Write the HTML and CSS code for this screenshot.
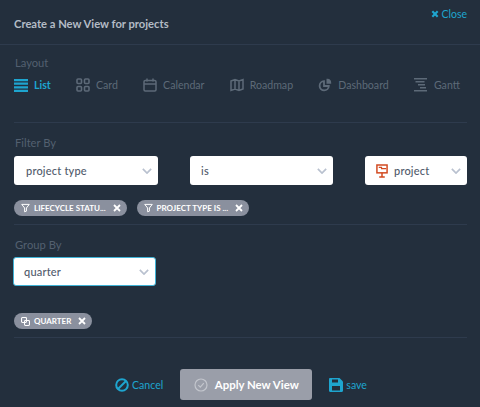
FILE: index.html
```html
<!DOCTYPE html>
<html lang="en">
  <head>
    <meta charset="UTF-8" />
    <title>Create a New View</title>
    <link rel="stylesheet" href="styles.css">
  </head>

  <body>
    <div class="modal">
      <div class="header">
        <p class="title">Create a New View for projects</p>
        <a class="close">
          <svg width="8" height="8" viewBox="0 0 9 9"><path d="M1.500 1.500l6 6M7.500 1.500l-6 6" stroke="#1ea5cf" stroke-width="2.400" fill="none"/></svg>
          Close
        </a>
      </div>

      <div class="section layoutSection">
        <p class="label">Layout</p>
        <div class="tabs">
          <div class="tab active">
            <svg width="14" height="13" viewBox="0 0 14 13"><path d="M0 0h14v2.200H0zM0 3.600h14v2.200H0zM0 7.200h14v2.200H0zM0 10.800h14V13H0z" fill="#1ea5cf"/></svg>
            <span>List</span>
          </div>
          <div class="tab">
            <svg width="14" height="14" viewBox="0 0 14 14" fill="none" stroke="#5d6a78" stroke-width="1.600"><rect x="1" y="1" width="4.500" height="4.500" rx="1"/><rect x="8.500" y="1" width="4.500" height="4.500" rx="1"/><rect x="1" y="8.500" width="4.500" height="4.500" rx="1"/><rect x="8.500" y="8.500" width="4.500" height="4.500" rx="1"/></svg>
            <span>Card</span>
          </div>
          <div class="tab">
            <svg width="14" height="14" viewBox="0 0 14 14" fill="none" stroke="#5d6a78" stroke-width="1.500"><rect x="1" y="2.500" width="12" height="10.500" rx="1.200"/><path d="M1 6h12M4 0.500v3M10 0.500v3"/></svg>
            <span>Calendar</span>
          </div>
          <div class="tab">
            <svg width="14" height="14" viewBox="0 0 14 14" fill="none" stroke="#5d6a78" stroke-width="1.500"><path d="M1 3l4-1.500 4 1.500 4-1.500v9.500l-4 1.500-4-1.500-4 1.500zM5 1.500V11M9 3v9.500"/></svg>
            <span>Roadmap</span>
          </div>
          <div class="tab">
            <svg width="14" height="14" viewBox="0 0 14 14" fill="none" stroke="#5d6a78" stroke-width="1.800"><path d="M6 3.200a4.600 4.600 0 1 0 4.800 4.800H6z"/><path d="M8.500 0.800h1a4 4 0 0 1 3.700 4v1H8.500z" fill="#5d6a78" stroke="none"/></svg>
            <span>Dashboard</span>
          </div>
          <div class="tab">
            <svg width="14" height="14" viewBox="0 0 14 14"><path d="M0 0h13v1.500H0zM1.500 3h9v1.500h-9zM4 6h7v1.500H4zM6 9h6v1.500H6zM0 12h13v1.500H0z" fill="#5d6a78"/></svg>
            <span>Gantt</span>
          </div>
        </div>
      </div>

      <div class="section filterSection">
        <p class="label">Filter By</p>
        <div class="filterRow">
          <div class="select typeSelect">
            <span>project type</span>
            <svg class="arrow" width="10" height="6" viewBox="0 0 12 7"><path d="M1 1l5 5 5-5" stroke="#b9c1cf" stroke-width="2" fill="none"/></svg>
          </div>
          <div class="select opSelect">
            <span>is</span>
            <svg class="arrow" width="10" height="6" viewBox="0 0 12 7"><path d="M1 1l5 5 5-5" stroke="#b9c1cf" stroke-width="2" fill="none"/></svg>
          </div>
          <div class="select valueSelect">
            <svg width="12" height="14" viewBox="0 0 13 15" fill="none" stroke="#d2491f"><rect x="1" y="1" width="11" height="8.500" stroke-width="1.600"/><path d="M3 3.500h3v1.500h5" stroke-width="1.300"/><path d="M6.500 9.500v4M3.500 14h6" stroke-width="1.600"/></svg>
            <span>project</span>
            <svg class="arrow" width="10" height="6" viewBox="0 0 12 7"><path d="M1 1l5 5 5-5" stroke="#b9c1cf" stroke-width="2" fill="none"/></svg>
          </div>
        </div>
        <div class="chips">
          <div class="chip">
            <svg width="9" height="10" viewBox="0 0 10 10"><path d="M0.800 1h8.400L6 5v3.500L4 9.200V5z" fill="none" stroke="#fff" stroke-width="1.100"/></svg>
            <span>LIFECYCLE STATU...</span>
            <svg class="chipX" width="8" height="8" viewBox="0 0 8 8"><path d="M1 1l6 6M7 1L1 7" stroke="#fff" stroke-width="1.800"/></svg>
          </div>
          <div class="chip">
            <svg width="9" height="10" viewBox="0 0 10 10"><path d="M0.800 1h8.400L6 5v3.500L4 9.200V5z" fill="none" stroke="#fff" stroke-width="1.100"/></svg>
            <span>PROJECT TYPE IS ...</span>
            <svg class="chipX" width="8" height="8" viewBox="0 0 8 8"><path d="M1 1l6 6M7 1L1 7" stroke="#fff" stroke-width="1.800"/></svg>
          </div>
        </div>
      </div>

      <div class="section groupSection">
        <p class="label">Group By</p>
        <div class="select groupSelect">
          <span>quarter</span>
          <svg class="arrow" width="10" height="6" viewBox="0 0 12 7"><path d="M1 1l5 5 5-5" stroke="#b9c1cf" stroke-width="2" fill="none"/></svg>
        </div>
        <div class="chips groupChips">
          <div class="chip">
            <svg width="9" height="9" viewBox="0 0 10 10" fill="none" stroke="#fff" stroke-width="1.200"><rect x="0.600" y="0.600" width="5.500" height="5.500" rx="1"/><rect x="3.900" y="3.900" width="5.500" height="5.500" rx="1"/></svg>
            <span>QUARTER</span>
            <svg class="chipX" width="8" height="8" viewBox="0 0 8 8"><path d="M1 1l6 6M7 1L1 7" stroke="#fff" stroke-width="1.800"/></svg>
          </div>
        </div>
      </div>

      <div class="footer">
        <a class="link cancel">
          <svg width="14" height="14" viewBox="0 0 14 14" fill="none" stroke="#1ea5cf" stroke-width="2"><circle cx="7" cy="7" r="5.800"/><path d="M3 11l8-8"/></svg>
          Cancel
        </a>
        <button class="apply">
          <svg width="14" height="14" viewBox="0 0 14 14" fill="none" stroke="#c3c6cd" stroke-width="1.200"><circle cx="7" cy="7" r="6"/><path d="M4.300 7.200l2 2 3.500-4"/></svg>
          Apply New View
        </button>
        <a class="link save">
          <svg width="14" height="14" viewBox="0 0 14 14"><path d="M0 1.200C0 .5.500 0 1.200 0h9.300L14 3.500v9.300c0 .7-.5 1.200-1.200 1.200H1.200C.5 14 0 13.500 0 12.800z" fill="#1ea5cf"/><path d="M3 1.500h6v3H3zM3 8h8v4.500H3z" fill="#232f3d"/></svg>
          save
        </a>
      </div>
    </div>
  </body>
</html>
```

FILE: styles.css
```css
* {
  margin: 0px;
  padding: 0px;
  box-sizing: border-box;
}
body {
  width: 480px;
  height: 407px;
  overflow: hidden;
  font-family: Lato, "Open Sans", sans-serif;
  background-color: #232f3d;
}
.modal {
  height: 407px;
  display: flex;
  flex-direction: column;
}

.header {
  height: 45px;
  display: flex;
  justify-content: space-between;
  padding: 0 13px 0 14px;
  border-bottom: 1px solid #2e3b4d;
}
.title {
  font-size: 11.2px;
  font-weight: 700;
  color: #b4bcc6;
  margin-top: 17px;
}
.close {
  display: flex;
  align-items: center;
  gap: 2px;
  height: 14px;
  margin-top: 7px;
  font-size: 10.5px;
  color: #1ea5cf;
}

.section {
  margin: 0 13px 0 14px;
  border-bottom: 1px solid #2e3b4d;
}
.label {
  font-size: 11.2px;
  line-height: 15px;
  padding-left: 1px;
  color: #536070;
}
.layoutSection {
  height: 78px;
  padding: 10px 7px 0 0;
}
.tabs {
  display: flex;
  justify-content: space-between;
  margin-top: 8px;
}
.tab {
  display: flex;
  align-items: center;
  gap: 6px;
  font-size: 10.6px;
  color: #5d6a78;
}
.tab.active {
  color: #1ea5cf;
  font-weight: 700;
}

.filterSection {
  height: 102px;
  padding-top: 12px;
}
.filterRow {
  display: flex;
  justify-content: space-between;
  margin-top: 6px;
}
.select {
  height: 29px;
  display: flex;
  align-items: center;
  gap: 6px;
  padding: 0 6px 0 12px;
  background-color: #fff;
  border-radius: 3px;
  font-size: 11px;
  font-weight: 500;
  letter-spacing: 0.2px;
  color: #505a6b;
}
.arrow {
  margin-left: auto;
}
.typeSelect {
  width: 144px;
}
.opSelect {
  width: 143px;
  padding-left: 11px;
}
.valueSelect {
  width: 102px;
  padding-left: 11px;
}
.chips {
  display: flex;
  gap: 10px;
  margin-top: 15px;
}
.chip {
  height: 16px;
  display: flex;
  align-items: center;
  gap: 4px;
  padding: 0 6px 0 7px;
  background-color: #8a909e;
  border-radius: 8px;
  font-size: 8px;
  font-weight: 700;
  color: #fff;
}
.chipX {
  margin-left: 3px;
}

.groupSection {
  height: 113px;
  padding-top: 12px;
}
.groupSelect {
  width: 143px;
  height: 29px;
  margin: 5px 0 0 -1px;
  padding-left: 10px;
  border: 1px solid #3fb3d6;
}
.groupChips {
  margin-top: 27px;
}

.footer {
  display: flex;
  align-items: center;
  margin-top: 31px;
  padding-left: 115px;
}
.link {
  display: flex;
  align-items: center;
  gap: 3px;
  font-size: 10.6px;
  color: #1ea5cf;
}
.apply {
  width: 132px;
  height: 31px;
  display: flex;
  align-items: center;
  justify-content: center;
  gap: 7px;
  margin: 0 17px 0 17px;
  border: none;
  border-radius: 3px;
  background-color: #9a9ea9;
  font-family: Lato, sans-serif;
  font-size: 11.4px;
  font-weight: 700;
  color: #fff;
}
```
